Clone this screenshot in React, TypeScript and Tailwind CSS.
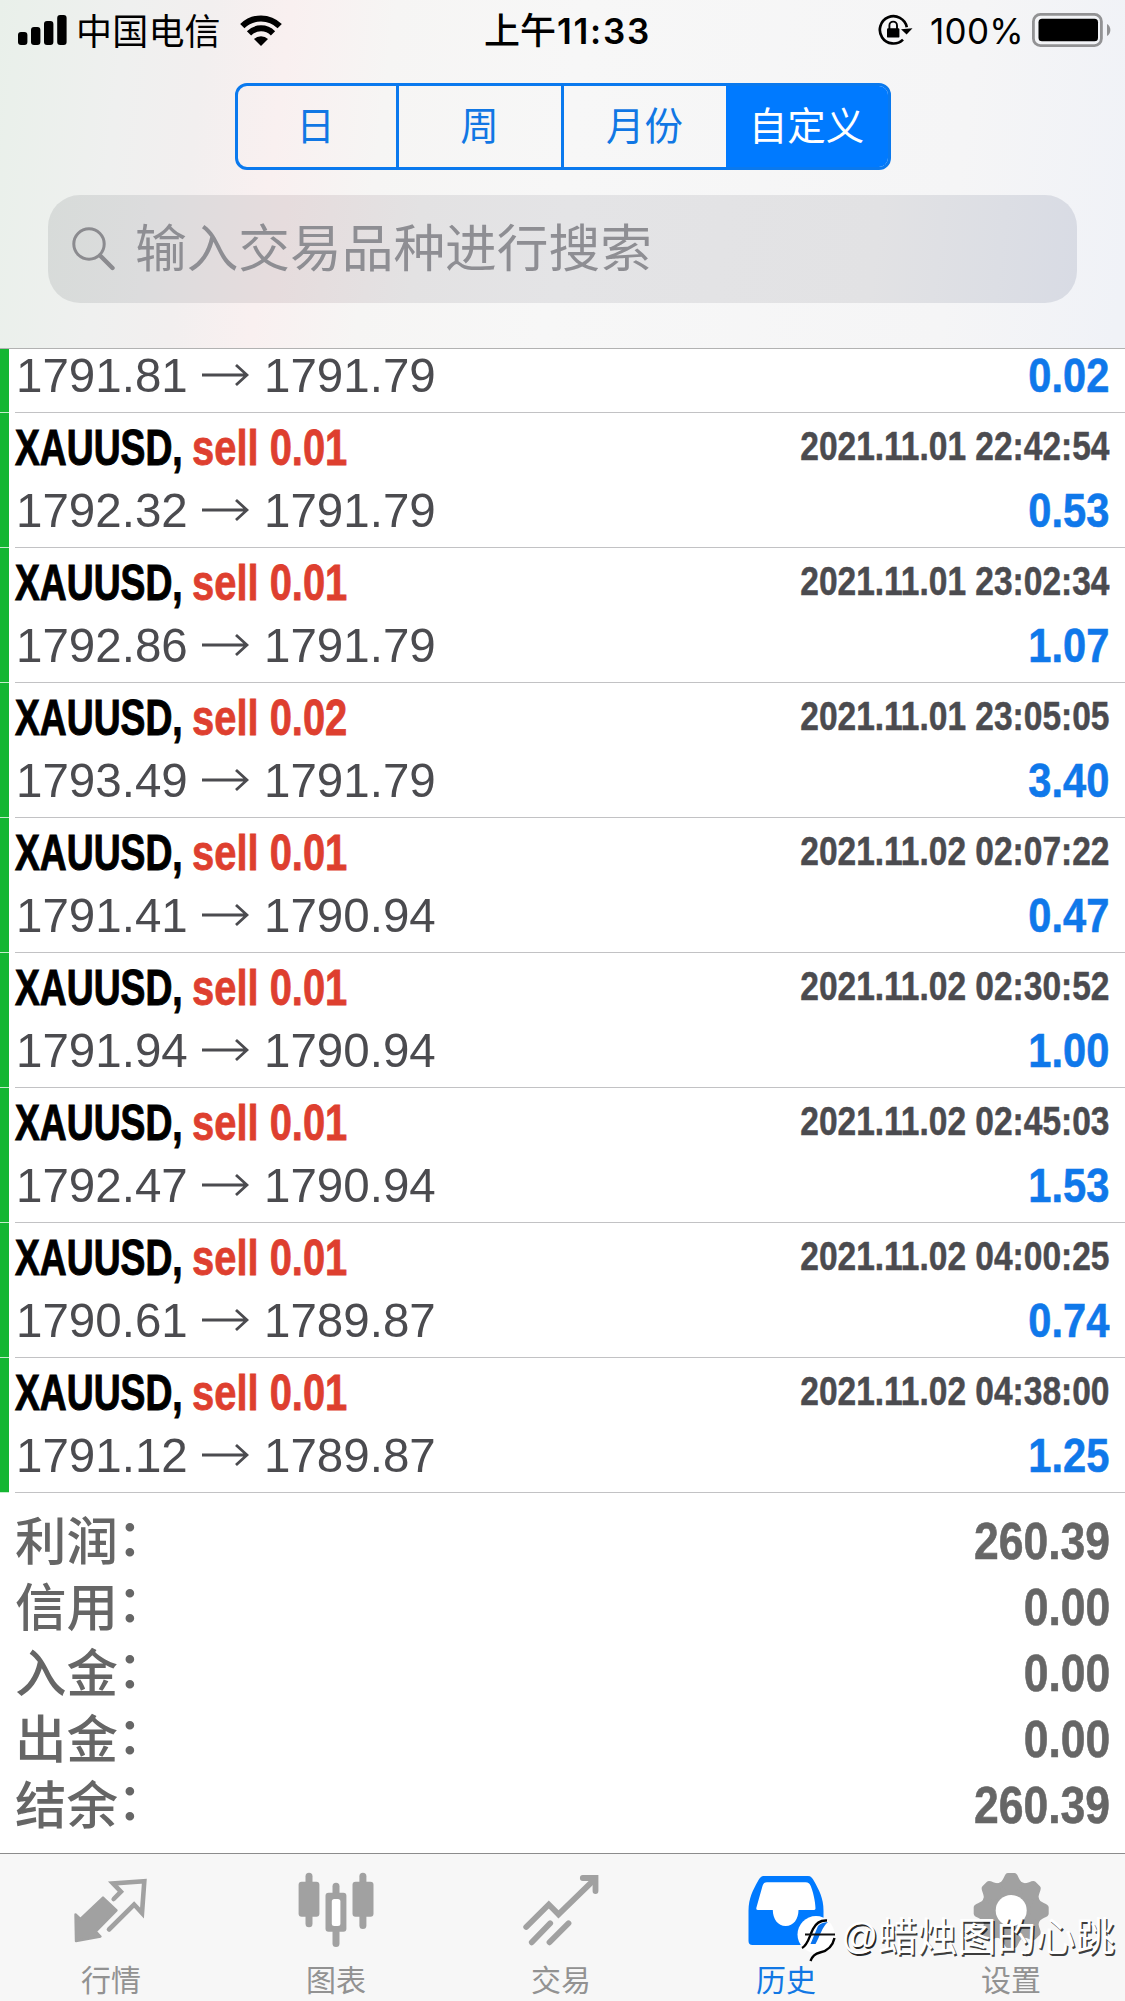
import React from 'react';

type Trade = {
  volume?: string;
  time?: string;
  open: string;
  close: string;
  profit: string;
};

const trades: Trade[] = [
  { open: '1791.81', close: '1791.79', profit: '0.02' },
  { volume: '0.01', time: '2021.11.01 22:42:54', open: '1792.32', close: '1791.79', profit: '0.53' },
  { volume: '0.01', time: '2021.11.01 23:02:34', open: '1792.86', close: '1791.79', profit: '1.07' },
  { volume: '0.02', time: '2021.11.01 23:05:05', open: '1793.49', close: '1791.79', profit: '3.40' },
  { volume: '0.01', time: '2021.11.02 02:07:22', open: '1791.41', close: '1790.94', profit: '0.47' },
  { volume: '0.01', time: '2021.11.02 02:30:52', open: '1791.94', close: '1790.94', profit: '1.00' },
  { volume: '0.01', time: '2021.11.02 02:45:03', open: '1792.47', close: '1790.94', profit: '1.53' },
  { volume: '0.01', time: '2021.11.02 04:00:25', open: '1790.61', close: '1789.87', profit: '0.74' },
  { volume: '0.01', time: '2021.11.02 04:38:00', open: '1791.12', close: '1789.87', profit: '1.25' },
];

const totals = [
  ['利润', '260.39'],
  ['信用', '0.00'],
  ['入金', '0.00'],
  ['出金', '0.00'],
  ['结余', '260.39'],
];

function StatusBar() {
  return (
    <div className="flex h-[60px] items-center justify-between pr-[14px] pl-[18px] text-black">
      <div className="flex w-[420px] items-center">
        <svg className="h-[30px] w-[49px]" viewBox="0 0 49 30">
          <rect x="0" y="17" width="9.4" height="13" rx="3" />
          <rect x="13" y="12" width="9.4" height="18" rx="3" />
          <rect x="26" y="6" width="9.4" height="24" rx="3" />
          <rect x="39.2" y="0" width="9.4" height="30" rx="3" />
        </svg>
        <span className="ml-[9px] pt-[5px] text-[36px] leading-[60px] tracking-[0.2px]">中国电信</span>
        <svg className="ml-[19px] h-[31px] w-[42px]" viewBox="0 0 42 31">
          <g fill="none" stroke="#000" strokeWidth="6">
            <path d="M2.3 11.2 A26.5 26.5 0 0 1 39.7 11.2" />
            <path d="M9 18.3 A17 17 0 0 1 33 18.3" />
          </g>
          <path d="M21 31 L14 24 A10 10 0 0 1 28 24 Z" />
        </svg>
      </div>
      <div className="flex w-[230px] items-center justify-center pl-[6px] text-[36px] leading-[60px] font-medium">
        <span className="pt-[4px]">上午</span>
        <span className="ml-[1px] pt-[2px] font-[Inter] text-[35px] font-semibold tracking-[1.7px]">11:33</span>
      </div>
      <div className="flex w-[420px] items-center justify-end">
        <svg className="h-[32px] w-[36px]" viewBox="0 0 36 32">
          <path d="M29.8 13.2 A13.6 13.6 0 1 0 26 25.6" fill="none" stroke="#000" strokeWidth="2.7" />
          <path d="M24 15.2 L35.5 14.2 L29.6 20.6 Z" />
          <rect x="10" y="14.2" width="12.4" height="9.4" rx="1.2" />
          <path d="M12.4 15 V11.4 a3.8 3.8 0 0 1 7.6 0 V15" fill="none" stroke="#000" strokeWidth="1.9" />
        </svg>
        <span className="ml-[17px] w-[94px] pt-[2px] font-[Inter] text-[35px] leading-[60px] tracking-[0.3px]">100%</span>
        <svg className="ml-[8px] h-[34px] w-[79px]" viewBox="0 0 79 34">
          <rect x="1.4" y="1.4" width="68" height="31.2" rx="7" fill="none" stroke="#929294" strokeWidth="2.8" />
          <rect x="6.5" y="5.7" width="59.5" height="22.6" rx="3.5" />
          <path d="M75 11 a7 7 0 0 1 0 12 Z" fill="#929294" />
        </svg>
      </div>
    </div>
  );
}

function Segments() {
  return (
    <div className="mx-auto mt-[23px] flex h-[87px] w-[656px] overflow-hidden rounded-[12px] border-[3px] border-[#0a79ee] text-[38.5px] leading-[82px] text-[#1177e4]">
      <div className="w-[161px] border-r-[3px] border-[#0a79ee] pr-[2px] text-center">日</div>
      <div className="w-[165px] border-r-[3px] border-[#0a79ee] text-center">周</div>
      <div className="w-[162px] text-center">月份</div>
      <div className="flex-1 bg-[#007aff] text-center text-white">自定义</div>
    </div>
  );
}

function Search() {
  return (
    <div className="mx-[48px] mt-[25px] flex h-[108px] items-center rounded-[32px] bg-[linear-gradient(97deg,#d7dbd9_0%,#dcdcdd_10%,#e6dcdd_23%,#e3e2e3_36%,#e4e4e6_50%,#e2e2e4_80%,#dcdee4_92%,#d8dbe4_100%)] pl-[24px] text-[#8e8e93]">
      <svg className="h-[44px] w-[44px]" viewBox="0 0 44 44" fill="none" stroke="#8b8b8f">
        <circle cx="17" cy="17" r="15.2" strokeWidth="3" />
        <path d="M28 28.5 L40.5 41" strokeWidth="4.4" strokeLinecap="round" />
      </svg>
      <span className="ml-[19px] text-[51.7px] leading-[104px]">输入交易品种进行搜索</span>
    </div>
  );
}

function TradeRow({ trade }: { trade: Trade }) {
  return (
    <div className="flex">
      <div className="w-[9px] border-b border-[#c4eccb] bg-[#14b632]" />
      <div className="ml-[6px] flex-1 border-b border-[#c2c2c4] pr-[16px] pb-[8px]">
        {trade.volume && (
          <div className="flex h-[68px] justify-between font-bold whitespace-nowrap">
            <div className="flex text-[50px] leading-[71px]">
              <span className="w-[177px] origin-left scale-x-[0.745] text-black [-webkit-text-stroke:1px_#000]">XAUUSD,</span>
              <span className="origin-left scale-x-[0.798] text-[#de3f2f] [-webkit-text-stroke:0.8px_#de3f2f]">sell {trade.volume}</span>
            </div>
            <div className="origin-right scale-x-[0.817] text-[41px] leading-[67px] text-[#4b4b4f] [-webkit-text-stroke:0.5px_#4b4b4f]">{trade.time}</div>
          </div>
        )}
        <div className={trade.volume ? 'flex h-[58px] justify-between' : 'flex h-[55px] items-center justify-between pb-[3px]'}>
          <div className="flex items-center text-[49px] leading-[58px] text-[#4b4b4f]">
            <span className="w-[187px] origin-left translate-x-[1px] scale-x-[0.97]">{trade.open}</span>
            <svg className="h-[24px] w-[47px]" viewBox="0 0 47 24" fill="none" stroke="#4b4b4f" strokeWidth="2.8">
              <path d="M0 12 H45 M34 2 L45 12 L34 22" />
            </svg>
            <span className="ml-[15px] origin-left scale-x-[0.97]">{trade.close}</span>
          </div>
          <div className="origin-right scale-x-[0.85] text-[49px] leading-[58px] font-bold text-[#0f78ea] [-webkit-text-stroke:0.6px_#0f78ea]">{trade.profit}</div>
        </div>
      </div>
    </div>
  );
}

function Totals() {
  return (
    <div className="h-[360px] pt-[15px] pr-[15px] pl-[15px] text-[#666]">
      {totals.map(([label, value]) => (
        <div key={label} className="flex h-[66px] justify-between">
          <span className="text-[51.5px] leading-[69px] font-medium">
            {label}
            <span className="inline-block -translate-x-[1px] -translate-y-[4px]">：</span>
          </span>
          <span className="origin-right scale-x-[0.855] text-[52px] leading-[67px] font-bold [-webkit-text-stroke:0.6px_#666]">{value}</span>
        </div>
      ))}
    </div>
  );
}

const gearAngles = [0, 45, 90, 135, 180, 225, 270, 315];

const icons: Record<string, React.ReactNode> = {
  行情: (
    <>
      <path d="M3.5 44.5 L8.3 49 L31 27.5 L44.5 40.3 L23.8 61.5 L28.5 66.5 L4 71 Z" fill="#a1a1a1" stroke="#a1a1a1" strokeWidth="2.4" strokeLinejoin="round" />
      <path d="M41.7 29 L48.9 21.7 L41 13.4 L72.3 11.3 L70 43 L62.1 34.5 L37 59.5" fill="none" stroke="#a1a1a1" strokeWidth="4.6" strokeLinecap="round" />
    </>
  ),
  图表: (
    <g fill="#a1a1a1">
      <rect x="8.5" y="2.7" width="7" height="54.6" rx="3.5" />
      <rect x="1.6" y="11.7" width="20.8" height="35" rx="3" />
      <rect x="35.5" y="12.7" width="7" height="64.3" rx="3.5" />
      <rect x="28.5" y="22.7" width="20.9" height="39" rx="3" />
      <rect x="34.8" y="29" width="8.6" height="27" rx="2.5" fill="#fff" />
      <rect x="62.4" y="2.7" width="7" height="56.3" rx="3.5" />
      <rect x="55.5" y="11.7" width="21" height="35" rx="3" />
    </g>
  ),
  交易: (
    <g fill="none" stroke="#a1a1a1" strokeWidth="5.8" strokeLinecap="round">
      <path d="M4.2 57 L26.8 34.5 L36.5 44.3 L72 9.8" />
      <path d="M60.8 8 H73.5 V21" />
      <path d="M9.8 72.3 L28.2 53.3 M27.5 72.3 L46.5 53.3" />
    </g>
  ),
  历史: (
    <>
      <path d="M17 6 H61 C64 6 65.5 8 67 11 C72 20 76.5 28 76.5 41 V71 Q76.5 75 72.5 75 H5.5 Q1.5 75 1.5 71 V41 C1.5 28 6 20 11 11 C12.5 8 14 6 17 6 Z" fill="#007aff" />
      <path d="M20 12.3 H58.5 C61.5 12.3 62.5 13.5 63.7 16 C66 21.5 68.3 31 68.5 38.5 Q68.5 40 66.5 40 H51.5 C51.5 49 46.5 56 38.7 56 C31 56 25.8 49 25.8 40 H11 Q9 40 9.3 38 L15.5 16 C16.5 13.3 17.5 12.3 20 12.3 Z" fill="#fff" />
    </>
  ),
  设置: (
    <g fill="#a1a1a1">
      <circle cx="39.2" cy="40.5" r="30.3" />
      {gearAngles.map((angle) => (
        <path
          key={angle}
          d="M36 3 H42.4 C46.5 3 46 11 52 14 L39.2 24 L26.4 14 C32.4 11 31.9 3 36 3 Z"
          transform={`rotate(${angle} 39.2 40.5)`}
        />
      ))}
      <circle cx="39.2" cy="40.5" r="15.5" fill="#fff" />
    </g>
  ),
};

function TabBar() {
  return (
    <nav className="flex h-[148px] border-t border-[#8c8c8c] bg-[#f7f7f7]">
      {Object.keys(icons).map((name) => (
        <div key={name} className="flex w-[225px] flex-col items-center pt-[16px] pr-[1px]">
          <svg className="h-[80px] w-[80px]" viewBox="0 0 80 80">
            {icons[name]}
          </svg>
          <span
            className={
              name === '历史'
                ? 'mt-[11px] pr-[2px] text-[30px] leading-[40px] text-[#1177e4]'
                : 'mt-[11px] pr-[2px] text-[30px] leading-[40px] text-[#929292]'
            }
          >
            {name}
          </span>
        </div>
      ))}
    </nav>
  );
}

function Watermark() {
  return (
    <div className="absolute right-[10px] bottom-[39px] flex h-[50px] items-center">
      <svg className="h-[50px] w-[42px]" viewBox="0 0 42 50">
        <circle cx="21" cy="22.5" r="18.5" fill="#fff" />
        <path d="M7 36 C13 33 14 25 18 17 C21 11 25 8 32 8.5" fill="none" stroke="#000" strokeWidth="2.4" />
        <path d="M15.5 32 L23 14 Q26 10.5 33 10 C27 15 25 24 20.5 32 Z" fill="#0b74ee" />
        <path d="M10 22.5 H40" stroke="#111" strokeWidth="2" />
        <path d="M39.5 26 C37.5 35 32 39 25 40.5 Q18 42 15.5 49" fill="none" stroke="#000" strokeWidth="2.4" />
      </svg>
      <span className="ml-[4px] text-[36px] leading-[40px] text-white [text-shadow:1.5px_1.5px_0.5px_rgba(0,0,0,0.85)]">@</span>
      <span className="text-[39.5px] leading-[40px] text-white [text-shadow:1.5px_1.5px_0.5px_rgba(0,0,0,0.75)]">
        蜡烛图的心跳
      </span>
    </div>
  );
}

export default function App() {
  return (
    <div className="relative flex h-[2001px] w-[1125px] flex-col overflow-hidden bg-white font-['Liberation_Sans','Noto_Sans_CJK_SC',sans-serif]">
      <header className="h-[349px] border-b border-[#b2b2b2] bg-[linear-gradient(97deg,#e9f0ea_0%,#eff0ef_11%,#f2efef_18%,#f9f0f0_25%,#f6f5f4_34%,#f7f7f7_50%,#f5f5f6_84%,#f0f2f7_99%)]">
        <StatusBar />
        <Segments />
        <Search />
      </header>
      <main className="flex-1">
        {trades.map((trade, i) => (
          <TradeRow key={i} trade={trade} />
        ))}
        <Totals />
      </main>
      <TabBar />
      <Watermark />
    </div>
  );
}
